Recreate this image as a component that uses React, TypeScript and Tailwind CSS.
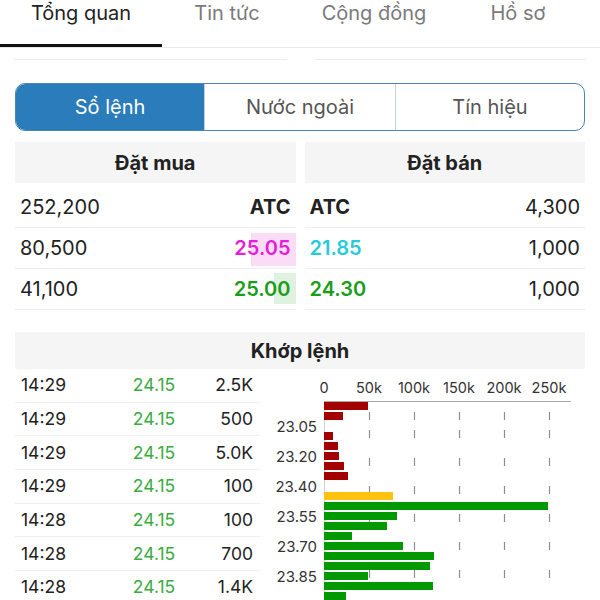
import type { ReactNode } from "react";

const FONT = { fontFamily: "Inter, 'Noto Sans', sans-serif" };

const TABS = [
  { label: "Tổng quan", w: "w-[162px]", active: true },
  { label: "Tin tức", w: "w-[130px]", active: false },
  { label: "Cộng đồng", w: "w-[164px]", active: false },
  { label: "Hồ sơ", w: "w-[124px]", active: false },
];

const TRADES = [
  ["14:29", "24.15", "2.5K"],
  ["14:29", "24.15", "500"],
  ["14:29", "24.15", "5.0K"],
  ["14:29", "24.15", "100"],
  ["14:28", "24.15", "100"],
  ["14:28", "24.15", "700"],
  ["14:28", "24.15", "1.4K"],
];

// bar widths in px (0.9px per 1k), null = empty row
const BARS: { w: number | null; c: string }[] = [
  { w: 44, c: "#a30000" },
  { w: 19, c: "#a30000" },
  { w: null, c: "" },
  { w: 9, c: "#a30000" },
  { w: 14, c: "#a30000" },
  { w: 15, c: "#a30000" },
  { w: 20, c: "#a30000" },
  { w: 24, c: "#a30000" },
  { w: null, c: "" },
  { w: 69, c: "#ffc20e" },
  { w: 224, c: "#009a00" },
  { w: 73, c: "#009a00" },
  { w: 63, c: "#009a00" },
  { w: 28, c: "#009a00" },
  { w: 79, c: "#009a00" },
  { w: 110, c: "#009a00" },
  { w: 106, c: "#009a00" },
  { w: 44, c: "#009a00" },
  { w: 109, c: "#009a00" },
  { w: 22, c: "#009a00" },
];

const TICKS = [
  { x: 64, t: "0" },
  { x: 109, t: "50k" },
  { x: 154, t: "100k" },
  { x: 199, t: "150k" },
  { x: 244, t: "200k" },
  { x: 289, t: "250k" },
];

const PRICE_LABELS = [
  { y: 58, t: "23.05" },
  { y: 88, t: "23.20" },
  { y: 118, t: "23.40" },
  { y: 148, t: "23.55" },
  { y: 178, t: "23.70" },
  { y: 208, t: "23.85" },
];

const DASH_Y = [43, 61, 89, 117, 145, 173, 201];

function BookRow({ children }: { children: ReactNode }) {
  return (
    <div className="relative flex h-[41px] items-center justify-between border-b border-[#eeeeee] px-[5px] text-[20px] text-[#222]">
      {children}
    </div>
  );
}

function VolumeChart() {
  return (
    <svg width="340" height="231" viewBox="0 0 340 231" className="block">
      {TICKS.map((t) => (
        <text key={t.t} x={t.x} y={24} textAnchor="middle" fontSize="14.5" fill="#333" style={FONT}>
          {t.t}
        </text>
      ))}
      {TICKS.slice(1).map((t) =>
        DASH_Y.map((y) => (
          <line key={`${t.x}-${y}`} x1={t.x + 0.5} y1={y} x2={t.x + 0.5} y2={y + 8} stroke="#8f8f8f" strokeWidth="1.2" />
        ))
      )}
      <line x1={64.5} y1={32} x2={64.5} y2={231} stroke="#d2d2d2" strokeWidth="1" />
      <line x1={64} y1={32.5} x2={311} y2={32.5} stroke="#a8a8a8" strokeWidth="1" />
      {BARS.map((b, i) =>
        b.w ? <rect key={i} x={64} y={33 + i * 10} width={b.w} height={8} fill={b.c} /> : null
      )}
      {PRICE_LABELS.map((l) => (
        <text key={l.t} x={57} y={l.y + 5} textAnchor="end" fontSize="15" fill="#333" style={FONT}>
          {l.t}
        </text>
      ))}
    </svg>
  );
}

export default function App() {
  return (
    <div className="h-[600px] w-[600px] overflow-hidden bg-white" style={FONT}>
      {/* top tabs */}
      <div className="flex h-[47px]">
        {TABS.map((t) => (
          <div
            key={t.label}
            className={`${t.w} flex h-[47px] justify-center text-[20px] leading-[26px] ${
              t.active ? "border-b-[3px] border-[#111] text-[#222]" : "text-[#7a7a7a]"
            }`}
          >
            {t.label}
          </div>
        ))}
      </div>
      <div className="h-px bg-[#e8e8e8]" />
      <div className="flex h-[12px] px-[14px]">
        <div className="w-[273px] border-b border-[#ececec]" />
        <div className="ml-[28px] w-[272px] border-b border-[#ececec]" />
      </div>

      {/* segmented control */}
      <div className="mx-[15px] mt-[23px] flex h-[48px] overflow-hidden rounded-[10px] border-[1.5px] border-[#4a86b0] text-[20px]">
        <div className="flex w-[188px] items-center justify-center bg-[#2b7cba] text-white">Sổ lệnh</div>
        <div className="flex w-[191px] items-center justify-center border-l border-[#c5d2dc] text-[#555]">Nước ngoài</div>
        <div className="flex flex-1 items-center justify-center border-l border-[#c5d2dc] text-[#555]">Tín hiệu</div>
      </div>

      {/* order book */}
      <div className="mt-[11px] grid grid-cols-2 gap-x-[9px] px-[15px]">
        <div>
          <div className="flex h-[41px] items-center justify-center bg-[#f5f5f5] text-[20px] font-bold text-[#222]">Đặt mua</div>
          <div className="h-[4px]" />
          <BookRow>
            <span>252,200</span>
            <span className="font-bold">ATC</span>
          </BookRow>
          <BookRow>
            <span>80,500</span>
            <div className="absolute right-0 top-[5px] bottom-[2px] w-[45px] bg-[#fbdcf6]" />
            <span className="relative font-semibold text-[#e41fd8]">25.05</span>
          </BookRow>
          <BookRow>
            <span>41,100</span>
            <div className="absolute right-0 top-[4px] bottom-[5px] w-[22px] bg-[#dff1df]" />
            <span className="relative font-semibold text-[#1c9c1c]">25.00</span>
          </BookRow>
        </div>
        <div>
          <div className="flex h-[41px] items-center justify-center bg-[#f5f5f5] text-[20px] font-bold text-[#222]">Đặt bán</div>
          <div className="h-[4px]" />
          <BookRow>
            <span className="font-bold">ATC</span>
            <span>4,300</span>
          </BookRow>
          <BookRow>
            <span className="font-semibold text-[#27cbd8]">21.85</span>
            <span>1,000</span>
          </BookRow>
          <BookRow>
            <span className="font-semibold text-[#1c9c1c]">24.30</span>
            <span>1,000</span>
          </BookRow>
        </div>
      </div>

      {/* matched orders */}
      <div className="mx-[15px] mt-[22px] flex h-[37px] items-center justify-center bg-[#f5f5f5] text-[20px] font-bold text-[#222]">
        Khớp lệnh
      </div>
      <div className="flex">
        <div className="ml-[15px] w-[245px]">
          {TRADES.map((r, i) => (
            <div key={i} className="flex h-[33.7px] items-center border-b border-[#f0f0f0] text-[17.5px] text-[#222]">
              <span className="w-[112px] pl-[6px]">{r[0]}</span>
              <span className="w-[54px] text-center text-[#3aac40]">{r[1]}</span>
              <span className="flex-1 pr-[7px] text-right">{r[2]}</span>
            </div>
          ))}
        </div>
        <VolumeChart />
      </div>
    </div>
  );
}
